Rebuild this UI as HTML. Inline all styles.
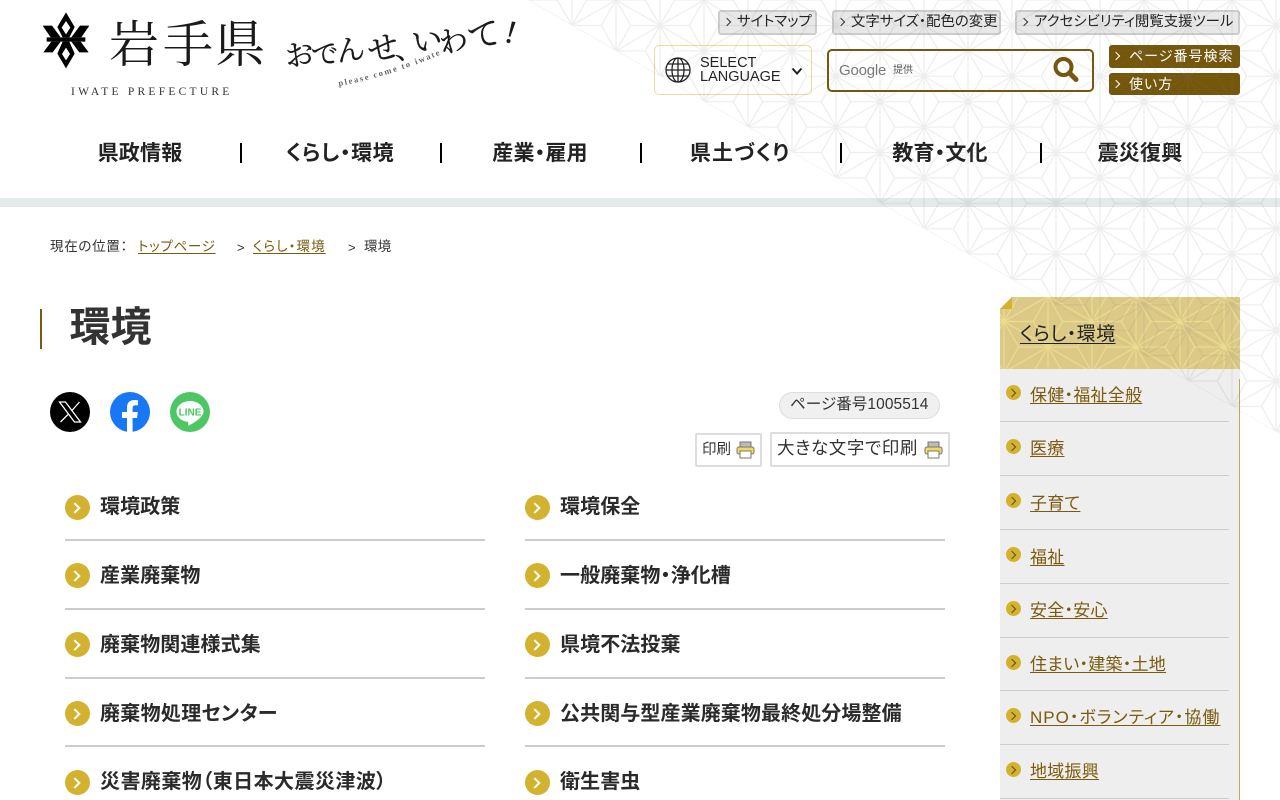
<!DOCTYPE html>
<html lang="ja"><head><meta charset="utf-8"><title>環境 - 岩手県</title>
<style>
html,body{margin:0;padding:0;width:1280px;height:800px;overflow:hidden;background:#fff}
body{position:relative;font-family:"Liberation Sans","Noto Sans CJK JP",sans-serif;color:#333;font-feature-settings:"palt"}
.t{position:absolute;white-space:nowrap;line-height:1}
.b{position:absolute}
a{color:#7a5a0c;text-decoration:underline;text-underline-offset:2px}
.top{position:absolute;box-sizing:border-box;top:10px;height:25px;background:#e8e8e8;border:2px solid #ccc;border-radius:3px;font-size:14.4px;line-height:21px;color:#222;white-space:nowrap;padding-left:17px}
.top:before,.br:before{content:"";position:absolute;left:4px;top:7px;width:5px;height:5px;border-top:1px solid #333;border-right:1px solid #333;transform:rotate(45deg)}
.br{position:absolute;box-sizing:border-box;left:1109px;width:131px;background:#75570c;border-radius:3px;color:#fff;font-size:14px;line-height:22px;padding-left:20px;letter-spacing:1px;white-space:nowrap}
.br:before{left:4px;top:8px;border-color:#fff}
.nav{position:absolute;top:144px;width:200px;text-align:center;font-size:21px;line-height:20px;font-weight:700;color:#222;letter-spacing:.2px;white-space:nowrap}
.sep{position:absolute;top:143px;width:2px;height:20px;background:#000}
.row{position:absolute;width:420px;height:2px;background:#ccc}
.c{position:absolute;width:25px;height:25px;border-radius:50%;background:#d2b22e}
.c:after{content:"";position:absolute;left:6px;top:8.5px;width:6px;height:6px;border-top:2.5px solid #fff;border-right:2.5px solid #fff;transform:rotate(45deg)}
.li{position:absolute;font-size:20px;line-height:20px;font-weight:700;color:#2a2a2a;letter-spacing:.1px;white-space:nowrap}
.s{position:absolute;width:15px;height:15px;border-radius:50%;background:#d2b22e;left:1006px}
.s:after{content:"";position:absolute;left:3px;top:4.5px;width:5px;height:5px;border-top:1px solid #6b4f0a;border-right:1px solid #6b4f0a;transform:rotate(45deg)}
.sl{position:absolute;left:1030px;font-size:17px;line-height:16px;white-space:nowrap;letter-spacing:.25px}
.sh{position:absolute;left:1000px;width:229px;height:1px;background:#ccc}
</style></head><body>

<!-- sidebar -->
<div class="b" style="left:1000px;top:369px;width:240px;height:431px;background:#eee"></div>
<div class="b" style="left:1239px;top:379px;width:1px;height:421px;background:#b9a863"></div>
<svg class="b" style="left:1000px;top:297px" width="240" height="72">
<defs><pattern id="hp" width="88" height="50.8" patternUnits="userSpaceOnUse" patternTransform="translate(4 24.5)">
<path d="M0 0V50.8M44 0V50.8M88 0V50.8M0 0L88 50.8M88 0L0 50.8M14.67 25.4L0 0M14.67 25.4L0 50.8M14.67 25.4H73.33M73.33 25.4L88 0M73.33 25.4L88 50.8M29.33 0H0M29.33 0L44 25.4M58.67 0H88M58.67 0L44 25.4M29.33 50.8H0M29.33 50.8L44 25.4M58.67 50.8H88M58.67 50.8L44 25.4" stroke="#ebdc8e" stroke-width="1.2" fill="none"/>
</pattern></defs>
<rect width="240" height="72" fill="#dcc987"/><rect width="240" height="72" fill="url(#hp)"/>
<path d="M0 0H12L0 12Z" fill="#fff"/><path d="M12 0V12H0Z" fill="#d2b22e"/></svg>
<div class="t" style="left:1020px;top:325px;font-size:19px;line-height:19px;color:#222;text-decoration:underline;text-underline-offset:3px;letter-spacing:.4px">くらし・環境</div>

<div class="s" style="top:385px"></div><a class="sl" style="top:388px">保健・福祉全般</a><div class="sh" style="top:421px"></div>
<div class="s" style="top:439px"></div><a class="sl" style="top:441px">医療</a><div class="sh" style="top:475px"></div>
<div class="s" style="top:493px"></div><a class="sl" style="top:496px">子育て</a><div class="sh" style="top:529px"></div>
<div class="s" style="top:547px"></div><a class="sl" style="top:550px">福祉</a><div class="sh" style="top:583px"></div>
<div class="s" style="top:601px"></div><a class="sl" style="top:603px">安全・安心</a><div class="sh" style="top:637px"></div>
<div class="s" style="top:655px"></div><a class="sl" style="top:657px">住まい・建築・土地</a><div class="sh" style="top:690px"></div>
<div class="s" style="top:708px"></div><a class="sl" style="top:710px;letter-spacing:1px">NPO・ボランティア・協働</a><div class="sh" style="top:744px"></div>
<div class="s" style="top:762px"></div><a class="sl" style="top:764px">地域振興</a><div class="sh" style="top:798px"></div>

<!-- grey bar -->
<div class="b" style="left:0;top:198px;width:1280px;height:9px;background:#e4eaea"></div>

<!-- logo -->
<svg class="b" style="left:30px;top:5px" width="100" height="70" viewBox="0 0 300 210">
<path fill="#000" fill-rule="evenodd" d="M108 22L134 66L118 97H98L82 66ZM108 48L95 68L108 88L121 68Z"/>
<path fill="#000" d="M38 62H66L92 97H62ZM178 62H150L124 97H154Z"/>
<path fill="#000" d="M50 97H166V110H50Z"/>
<path fill="#000" d="M40 142H68L92 110H64ZM176 142H148L124 110H152Z"/>
<path fill="#000" fill-rule="evenodd" d="M98 110H118L134 146L108 190L82 146ZM108 128L96 147L108 166L120 147Z"/>
</svg>
<svg class="b" style="left:0;top:0" width="540" height="110">
<g font-family="'Liberation Serif','Noto Serif CJK SC',serif" fill="#1a1a1a">
<text x="109" y="62" font-size="50">岩</text><text x="163" y="62" font-size="50">手</text><text x="215" y="62" font-size="50">県</text>
<text x="71" y="95" font-size="11.5" letter-spacing="3.25" fill="#333">IWATE PREFECTURE</text>
<g stroke="#1a1a1a" stroke-width=".35">
<text font-size="29" transform="translate(286 67) rotate(-8)">お</text>
<text font-size="27" transform="translate(314 66) rotate(-10)">で</text>
<text font-size="29" transform="translate(339 62) rotate(-10)">ん</text>
<text font-size="31" transform="translate(370 62) rotate(-12)">せ</text>
<text font-size="28" transform="translate(396 60) rotate(-12)">、</text>
<text font-size="30" transform="translate(414 54) rotate(-12)">い</text>
<text font-size="29" transform="translate(442 54) rotate(-14)">わ</text>
<text font-size="33" transform="translate(472 50) rotate(-14)">て</text>
<text font-size="32" font-style="italic" transform="translate(504 42) rotate(6)">!</text>
</g>
<path id="pc" d="M339 86Q395 76 460 46" fill="none"/>
<text font-size="8.500" font-weight="700" letter-spacing="1.700" fill="#666"><textPath href="#pc">please come to iwate</textPath></text>
</g></svg>

<!-- top links -->
<div class="top" style="left:718px;width:99px">サイトマップ</div>
<div class="top" style="left:832px;width:169px">文字サイズ・配色の変更</div>
<div class="top" style="left:1015px;width:225px">アクセシビリティ閲覧支援ツール</div>

<!-- language -->
<div class="b" style="left:654px;top:45px;width:156px;height:48px;background:#fff;border:1px solid #ecdc96;border-radius:5px"></div>
<svg class="b" style="left:665px;top:57px" width="26" height="26" viewBox="0 0 26 26" fill="none" stroke="#222" stroke-width="1.3">
<circle cx="13" cy="13" r="12"/><ellipse cx="13" cy="13" rx="6" ry="12"/><path d="M13 1V25M1 13H25M3 7H23M3 19H23"/></svg>
<div class="t" style="left:700px;top:56px;font-size:14.500px;line-height:14px;color:#222;font-feature-settings:normal">SELECT<br>LANGUAGE</div>
<svg class="b" style="left:791px;top:67px" width="12" height="9" viewBox="0 0 12 9" fill="none" stroke="#222" stroke-width="2"><path d="M1.500 1.500L6 6.500L10.500 1.500"/></svg>

<!-- search -->
<div class="b" style="left:827px;top:49px;width:263px;height:39px;background:#fff;border:2px solid #75570c;border-radius:5px"></div>
<div class="t" style="left:839px;top:63px;font-size:15px;color:#777;letter-spacing:-.2px">Google</div>
<div class="t" style="left:893px;top:66px;font-size:10px;color:#555">提供</div>
<svg class="b" style="left:1052px;top:56px" width="27" height="27" viewBox="0 0 27 27" fill="none" stroke="#75570c"><circle cx="11.500" cy="11" r="8" stroke-width="4"/><path d="M17.500 17L24 23.500" stroke-width="5" stroke-linecap="round"/></svg>

<div class="br" style="top:45px;height:23px">ページ番号検索</div>
<div class="br" style="top:73px;height:22px">使い方</div>

<!-- nav -->
<div class="nav" style="left:40px">県政情報</div><div class="sep" style="left:240px"></div>
<div class="nav" style="left:240px;letter-spacing:.6px">くらし・環境</div><div class="sep" style="left:440px"></div>
<div class="nav" style="left:440px">産業・雇用</div><div class="sep" style="left:640px"></div>
<div class="nav" style="left:640px;letter-spacing:1.2px">県土づくり</div><div class="sep" style="left:840px"></div>
<div class="nav" style="left:840px">教育・文化</div><div class="sep" style="left:1040px"></div>
<div class="nav" style="left:1040px">震災復興</div>

<!-- breadcrumb -->
<div class="t" style="left:50px;top:240px;font-size:13.500px;color:#333;letter-spacing:.7px">現在の位置：</div>
<a class="t" style="left:138px;top:240px;font-size:13.500px;letter-spacing:.7px">トップページ</a>
<div class="t" style="left:237px;top:241px;font-size:13px">&gt;</div>
<a class="t" style="left:253px;top:240px;font-size:13.500px;letter-spacing:1.100px">くらし・環境</a>
<div class="t" style="left:348px;top:241px;font-size:13px">&gt;</div>
<div class="t" style="left:364px;top:240px;font-size:13.500px;letter-spacing:.1px">環境</div>

<!-- heading -->
<div class="b" style="left:40px;top:309px;width:2px;height:40px;background:#7a5a0c"></div>
<div class="t" style="left:69.500px;top:307px;font-size:41px;line-height:41px;font-weight:700;color:#333">環境</div>

<!-- social -->
<svg class="b" style="left:50px;top:392px" width="40" height="40" viewBox="0 0 40 40"><circle cx="20" cy="20" r="20" fill="#000"/><path d="M9.500 10H15.500L30.500 30H24.500Z" fill="none" stroke="#fff" stroke-width="1.300"/><path d="M29.500 10L21.500 19M18 22.500L10.500 30" fill="none" stroke="#fff" stroke-width="1.300"/></svg>
<svg class="b" style="left:110px;top:392px" width="40" height="40" viewBox="0 0 40 40"><circle cx="20" cy="20" r="20" fill="#1877f2"/><path fill="#fff" d="M17 40V26H12V20H17V15.500C17 10.500 20 8 24.300 8C26.300 8 28 8.300 28 8.300V13.300H25.600C23.200 13.300 22.600 14.700 22.600 16.200V20H27.800L27 26H22.600V40Z"/></svg>
<svg class="b" style="left:170px;top:392px" width="40" height="40" viewBox="0 0 40 40"><circle cx="20" cy="20" r="20" fill="#4cc764"/><path fill="#fff" d="M20 9C12.500 9 6.500 13.700 6.500 19.500C6.500 24.700 11.200 29 17.600 29.800C18.600 30 18.200 32 18 33C18 33.500 18.500 33.700 19.500 33.200C23 31.300 33.500 25.500 33.500 19.500C33.500 13.700 27.500 9 20 9Z"/><text x="20" y="23.500" text-anchor="middle" font-family="'Liberation Sans',sans-serif" font-weight="700" font-size="10" fill="#4cc764">LINE</text></svg>

<!-- page number -->
<div class="b" style="left:779px;top:392px;width:159px;height:25px;background:#f0f0f0;border:1px solid #ddd;border-radius:14px"></div>
<div class="t" style="left:790px;top:397px;font-size:15.500px;color:#333;letter-spacing:.1px">ページ番号1005514</div>

<!-- print -->
<div class="b" style="left:695px;top:433px;width:63px;height:30px;border:2px solid #ddd;background:#fff;border-radius:2px"></div>
<div class="t" style="left:702px;top:443px;font-size:14.500px;color:#333">印刷</div>
<svg class="b" style="left:736px;top:441px" width="19" height="18" viewBox="0 0 19 18"><rect x="4" y="1" width="11" height="6" fill="#bbb" stroke="#777"/><rect x="1" y="6" width="17" height="7" rx="2" fill="#f2d95c" stroke="#777"/><rect x="4" y="10" width="11" height="7" fill="#fff" stroke="#777"/></svg>
<div class="b" style="left:770px;top:432px;width:176px;height:31px;border:2px solid #ddd;background:#fff;border-radius:2px"></div>
<div class="t" style="left:777px;top:440px;font-size:17.500px;color:#333;letter-spacing:.6px">大きな文字で印刷</div>
<svg class="b" style="left:924px;top:441px" width="19" height="18" viewBox="0 0 19 18"><rect x="4" y="1" width="11" height="6" fill="#bbb" stroke="#777"/><rect x="1" y="6" width="17" height="7" rx="2" fill="#f2d95c" stroke="#777"/><rect x="4" y="10" width="11" height="7" fill="#fff" stroke="#777"/></svg>

<!-- list -->
<div class="c" style="left:65px;top:495px"></div><div class="li" style="left:100px;top:497px">環境政策</div><div class="row" style="left:65px;top:539px"></div>
<div class="c" style="left:525px;top:495px"></div><div class="li" style="left:560px;top:497px">環境保全</div><div class="row" style="left:525px;top:539px"></div>
<div class="c" style="left:65px;top:563px"></div><div class="li" style="left:100px;top:566px">産業廃棄物</div><div class="row" style="left:65px;top:608px"></div>
<div class="c" style="left:525px;top:563px"></div><div class="li" style="left:560px;top:566px">一般廃棄物・浄化槽</div><div class="row" style="left:525px;top:608px"></div>
<div class="c" style="left:65px;top:632px"></div><div class="li" style="left:100px;top:635px">廃棄物関連様式集</div><div class="row" style="left:65px;top:677px"></div>
<div class="c" style="left:525px;top:632px"></div><div class="li" style="left:560px;top:635px">県境不法投棄</div><div class="row" style="left:525px;top:677px"></div>
<div class="c" style="left:65px;top:701px"></div><div class="li" style="left:100px;top:704px;letter-spacing:.3px">廃棄物処理センター</div><div class="row" style="left:65px;top:745px"></div>
<div class="c" style="left:525px;top:701px"></div><div class="li" style="left:560px;top:704px">公共関与型産業廃棄物最終処分場整備</div><div class="row" style="left:525px;top:745px"></div>
<div class="c" style="left:65px;top:770px"></div><div class="li" style="left:100px;top:772px;letter-spacing:.45px">災害廃棄物（東日本大震災津波）</div>
<div class="c" style="left:525px;top:770px"></div><div class="li" style="left:560px;top:772px">衛生害虫</div>

<!-- asanoha overlay -->
<svg class="b" style="left:0;top:0;pointer-events:none" width="1280" height="800">
<defs>
<pattern id="as" width="88" height="50.8" patternUnits="userSpaceOnUse" patternTransform="translate(0 0.07)">
<path d="M0 0V50.8M44 0V50.8M88 0V50.8M0 0L88 50.8M88 0L0 50.8M14.67 25.4L0 0M14.67 25.4L0 50.8M14.67 25.4H73.33M73.33 25.4L88 0M73.33 25.4L88 50.8M29.33 0H0M29.33 0L44 25.4M58.67 0H88M58.67 0L44 25.4M29.33 50.8H0M29.33 50.8L44 25.4M58.67 50.8H88M58.67 50.8L44 25.4" stroke="#787878" stroke-opacity=".12" stroke-width="1.3" fill="none"/>
</pattern>
<clipPath id="cl"><path d="M528 0H1280V434Z"/></clipPath>
</defs>
<rect width="1280" height="800" fill="url(#as)" clip-path="url(#cl)"/>
</svg>
</body></html>
